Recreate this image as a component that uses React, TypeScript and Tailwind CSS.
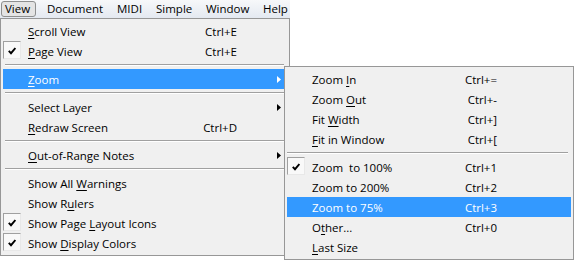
import React from "react";

type Item =
  | { sep: true }
  | { sep?: false; label: string; sc?: string; checked?: boolean; hl?: boolean; arrow?: boolean };

const mainItems: Item[] = [
  { label: "&Scroll View", sc: "Ctrl+E" },
  { label: "&Page View", sc: "Ctrl+E", checked: true },
  { sep: true },
  { label: "&Zoom", hl: true, arrow: true },
  { sep: true },
  { label: "Select Layer", arrow: true },
  { label: "&Redraw Screen", sc: "Ctrl+D" },
  { sep: true },
  { label: "&Out-of-Range Notes", arrow: true },
  { sep: true },
  { label: "Show All &Warnings" },
  { label: "Show R&ulers" },
  { label: "Show Page &Layout Icons", checked: true },
  { label: "Show &Display Colors", checked: true },
];

const subItems: Item[] = [
  { label: "Zoom &In", sc: "Ctrl+=" },
  { label: "Zoom &Out", sc: "Ctrl+-" },
  { label: "Fit &Width", sc: "Ctrl+]" },
  { label: "&Fit in Window", sc: "Ctrl+[" },
  { sep: true },
  { label: "Zoom  to 100%", sc: "Ctrl+1", checked: true },
  { label: "Zoom to 200%", sc: "Ctrl+2" },
  { label: "Zoom to 75%", sc: "Ctrl+3", hl: true },
  { label: "O&ther...", sc: "Ctrl+0" },
  { label: "&Last Size" },
];

function Label({ text }: { text: string }) {
  const i = text.indexOf("&");
  if (i < 0) return <>{text}</>;
  return (
    <>
      {text.slice(0, i)}
      <span className="underline decoration-1 underline-offset-[2px]">{text[i + 1]}</span>
      {text.slice(i + 2)}
    </>
  );
}

function Check() {
  return (
    <div className="flex h-[18px] w-[18px] items-center justify-center border border-l-[#a0a0a0] border-t-[#a0a0a0] border-r-[#e8e8e8] border-b-[#e8e8e8] bg-[#f9f9f9]">
      <svg width="8" height="8" viewBox="0 0 8 8" className="mt-[1px]">
        <path d="M0.8 3.8 L3 6.2 L7.4 1" fill="none" stroke="#000" strokeWidth="1.9" />
      </svg>
    </div>
  );
}

function Menu({
  items,
  labelW,
  scW,
  sepClass,
}: {
  items: Item[];
  labelW: string;
  scW: string;
  sepClass: string;
}) {
  return (
    <div className="flex flex-col">
      {items.map((it, idx) => {
        if (it.sep) {
          return (
            <div key={idx} className="py-[3px]">
              <div className={"h-[2px] border-t border-b border-t-[#a0a0a0] border-b-white " + sepClass} />
            </div>
          );
        }
        return (
          <div
            key={idx}
            className={
              "flex h-[20px] items-center " +
              (it.hl ? "bg-[#3399ff] text-white" : "text-black")
            }
          >
            <div className="flex h-[20px] w-[25px] items-start">{it.checked && <Check />}</div>
            <div className={"whitespace-pre pt-[1px] " + labelW}>
              <Label text={it.label} />
            </div>
            <div className={"text-right pt-[1px] " + scW}>{it.sc}</div>
            {it.arrow && (
              <div className="ml-auto mr-[6px] flex items-center">
                <svg width="4" height="7" viewBox="0 0 4 7">
                  <polygon points="0,0 4,3.5 0,7" fill="currentColor" />
                </svg>
              </div>
            )}
          </div>
        );
      })}
    </div>
  );
}

export default function App() {
  return (
    <div
      className="relative h-[260px] w-[574px] overflow-hidden bg-white text-[11.5px] leading-none text-black"
      style={{ fontFamily: '"Open Sans", "Liberation Sans", sans-serif' }}
    >
      {/* Menu bar */}
      <div className="flex h-[18px] w-[290px] items-center bg-gradient-to-b from-[#f7f8fa] to-[#e4e9f1]">
        <div className="ml-[1px] flex h-[16px] w-[35px] items-center rounded-[3px] border border-[#8e8f8f] bg-[#e4e4e4] pl-[3px]">
          View
        </div>
        <div className="ml-[11px] w-[70px]">Document</div>
        <div className="w-[39px]">MIDI</div>
        <div className="w-[50px]">Simple</div>
        <div className="w-[57px]">Window</div>
        <div>Help</div>
      </div>

      {/* Main dropdown */}
      <div className="absolute left-0 top-[18px] w-[290px] border border-[#979797] bg-[#f0f0f0] p-[2px]">
        <Menu items={mainItems} labelW="w-[150px]" scW="w-[59px]" sepClass="ml-[2px] mr-[3px]" />
      </div>

      {/* Zoom submenu */}
      <div className="absolute left-[284px] top-[66px] w-[290px] border border-[#979797] bg-[#f0f0f0] p-[2px]">
        <Menu items={subItems} labelW="w-[120px]" scW="w-[65px]" sepClass="ml-0 mr-[3px]" />
      </div>
    </div>
  );
}
